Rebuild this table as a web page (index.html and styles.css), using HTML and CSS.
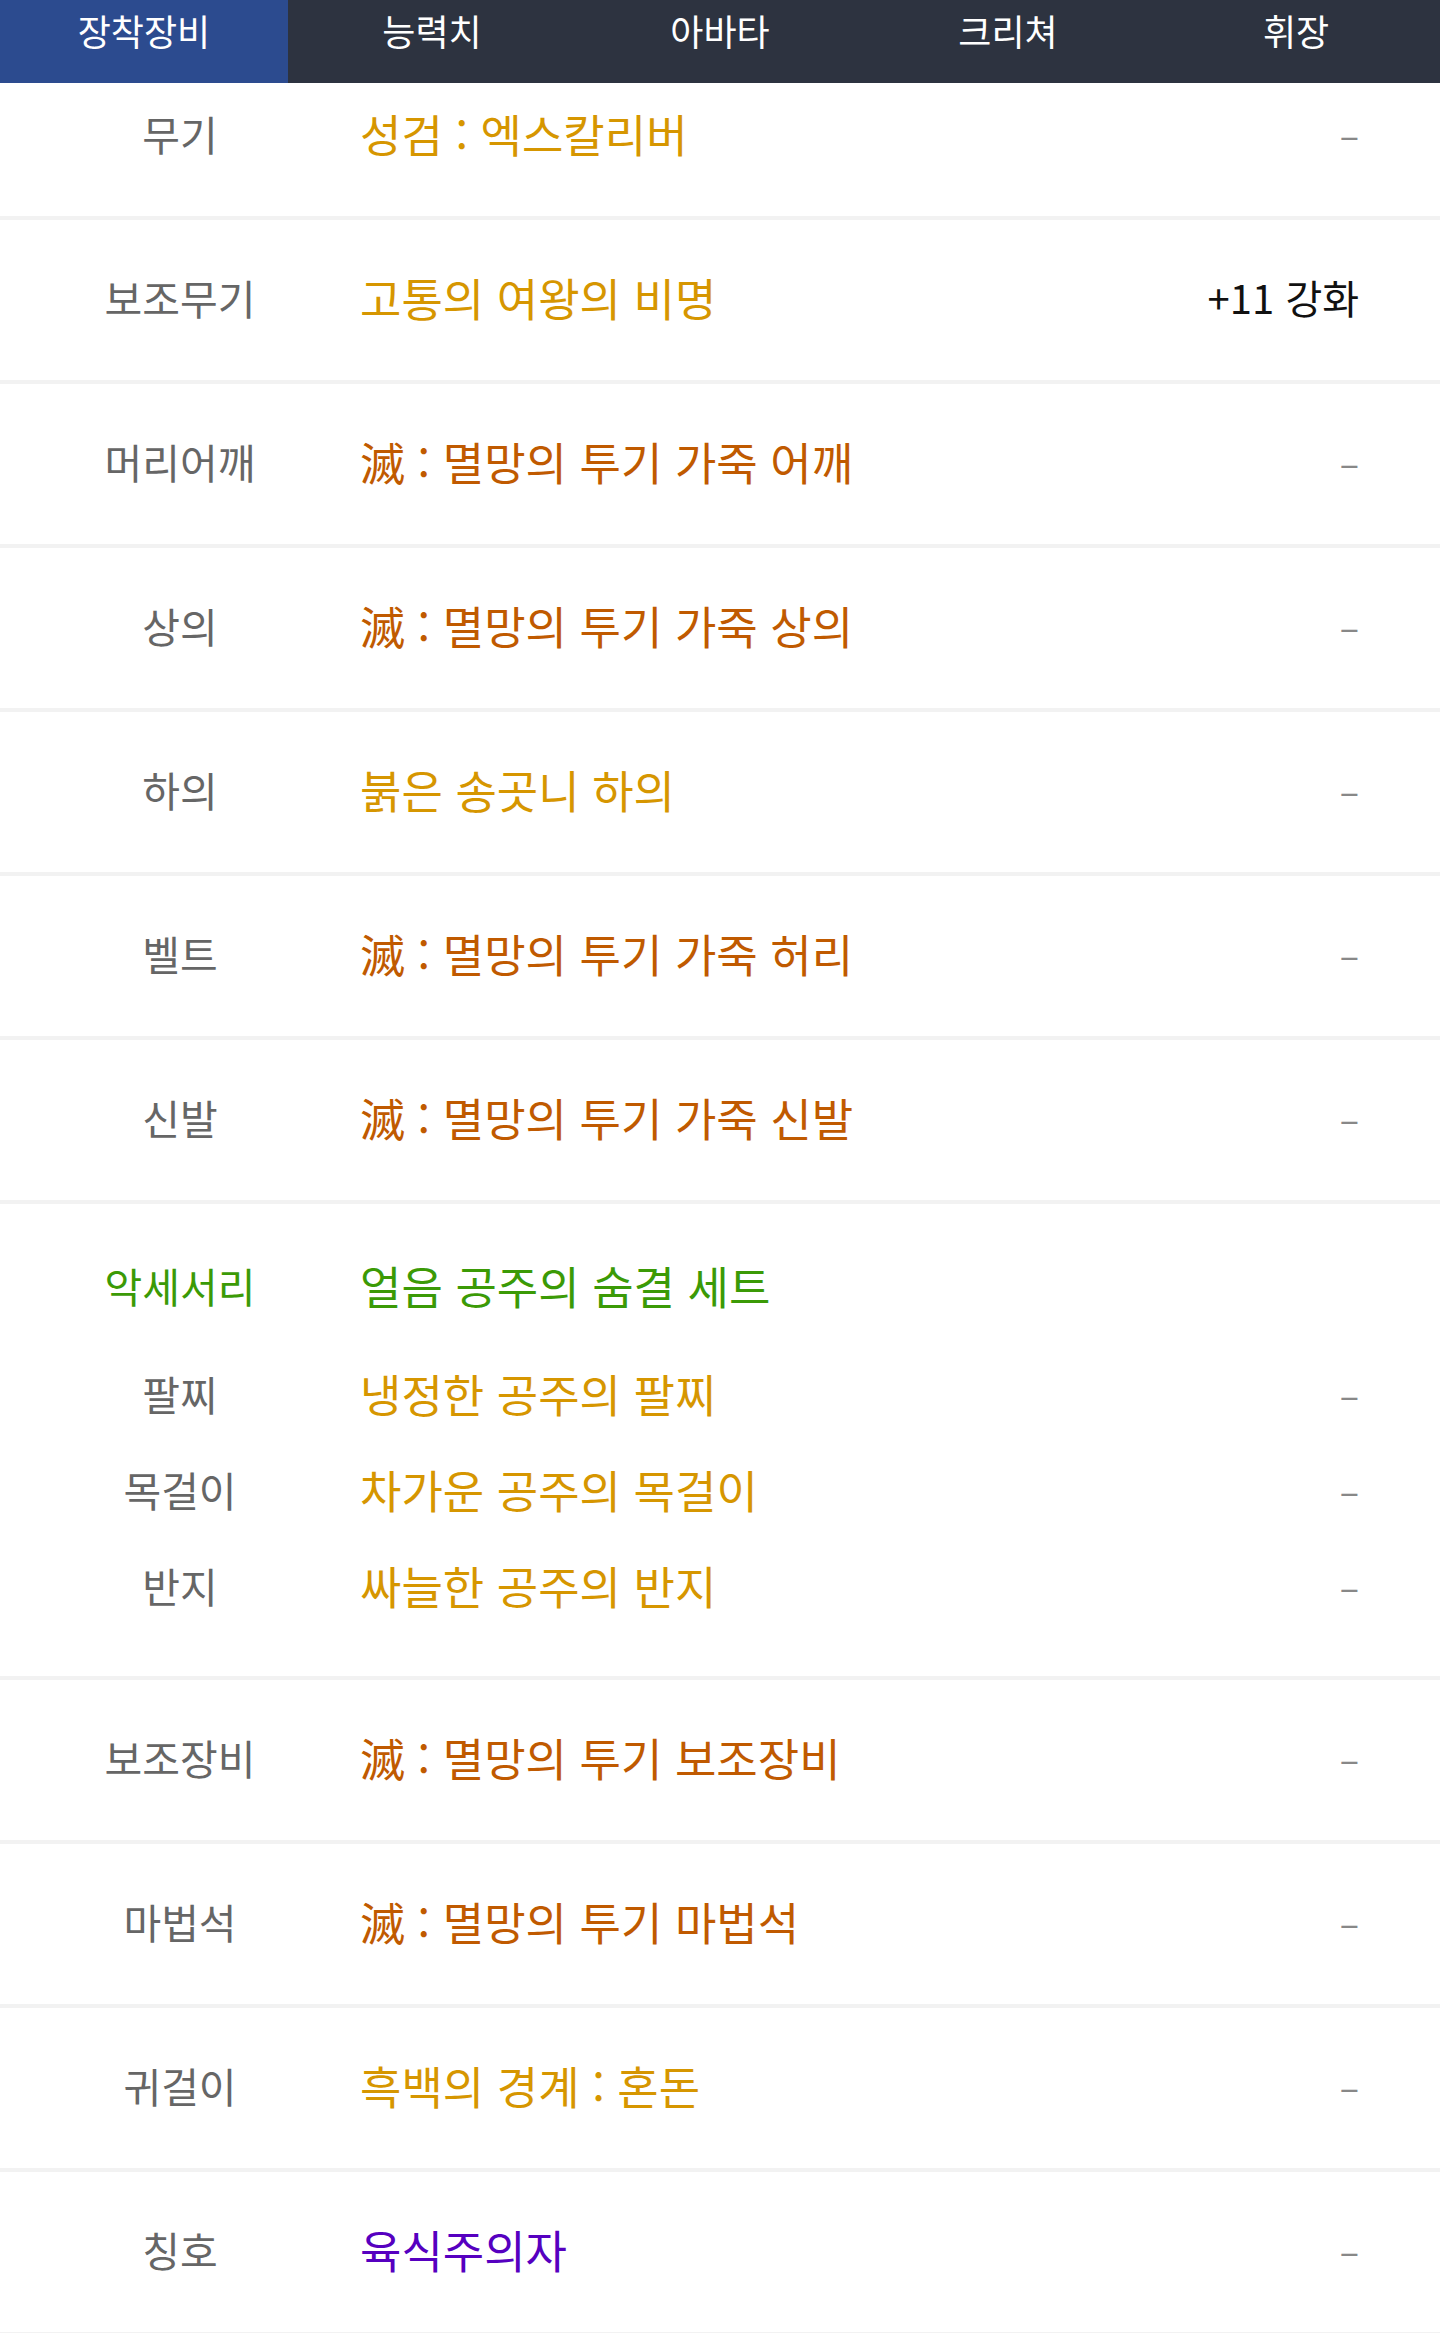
FILE: index.html
```html
<!DOCTYPE html>
<html lang="ko">
<head>
    <meta charset="UTF-8">
    <meta name="viewport" content="width=device-width, initial-scale=1.0">
    <title>장착장비</title>
    <link rel="stylesheet" href="styles.css">
</head>
<body>
    <nav class="tabs">
        <a class="tab active" href="#">장착장비</a>
        <a class="tab" href="#">능력치</a>
        <a class="tab" href="#">아바타</a>
        <a class="tab" href="#">크리쳐</a>
        <a class="tab" href="#">휘장</a>
    </nav>

    <div class="equip-list">
        <div class="equip-row">
            <span class="slot">무기</span>
            <span class="item gold">성검 : 엑스칼리버</span>
            <span class="extra">–</span>
        </div>
        <div class="equip-row">
            <span class="slot">보조무기</span>
            <span class="item gold">고통의 여왕의 비명</span>
            <span class="extra enchant">+11 강화</span>
        </div>
        <div class="equip-row">
            <span class="slot">머리어깨</span>
            <span class="item orange">滅 : 멸망의 투기 가죽 어깨</span>
            <span class="extra">–</span>
        </div>
        <div class="equip-row">
            <span class="slot">상의</span>
            <span class="item orange">滅 : 멸망의 투기 가죽 상의</span>
            <span class="extra">–</span>
        </div>
        <div class="equip-row">
            <span class="slot">하의</span>
            <span class="item gold">붉은 송곳니 하의</span>
            <span class="extra">–</span>
        </div>
        <div class="equip-row">
            <span class="slot">벨트</span>
            <span class="item orange">滅 : 멸망의 투기 가죽 허리</span>
            <span class="extra">–</span>
        </div>
        <div class="equip-row">
            <span class="slot">신발</span>
            <span class="item orange">滅 : 멸망의 투기 가죽 신발</span>
            <span class="extra">–</span>
        </div>

        <!-- set items -->
        <div class="equip-set">
            <div class="set-head">
                <span class="slot green">악세서리</span>
                <span class="item green">얼음 공주의 숨결 세트</span>
            </div>
            <div class="set-row">
                <span class="slot">팔찌</span>
                <span class="item gold">냉정한 공주의 팔찌</span>
                <span class="extra">–</span>
            </div>
            <div class="set-row">
                <span class="slot">목걸이</span>
                <span class="item gold">차가운 공주의 목걸이</span>
                <span class="extra">–</span>
            </div>
            <div class="set-row">
                <span class="slot">반지</span>
                <span class="item gold">싸늘한 공주의 반지</span>
                <span class="extra">–</span>
            </div>
        </div>

        <div class="equip-row">
            <span class="slot">보조장비</span>
            <span class="item orange">滅 : 멸망의 투기 보조장비</span>
            <span class="extra">–</span>
        </div>
        <div class="equip-row">
            <span class="slot">마법석</span>
            <span class="item orange">滅 : 멸망의 투기 마법석</span>
            <span class="extra">–</span>
        </div>
        <div class="equip-row">
            <span class="slot">귀걸이</span>
            <span class="item gold">흑백의 경계 : 혼돈</span>
            <span class="extra">–</span>
        </div>
        <div class="equip-row">
            <span class="slot">칭호</span>
            <span class="item purple">육식주의자</span>
            <span class="extra">–</span>
        </div>
    </div>
</body>
</html>
```

FILE: styles.css
```css
/* Base styles */
* {
    box-sizing: border-box;
    margin: 0;
    padding: 0;
}

body {
    font-family: "Noto Sans CJK KR", "Noto Sans", sans-serif;
    background: #fff;
    color: #333;
}

a {
    text-decoration: none;
}

/* Top tabs */
.tabs {
    position: sticky;
    top: 0;
    z-index: 10;
    display: flex;
    height: 83px;
    background-color: #2d3340;
}

.tab {
    flex: 1;
    text-align: center;
    color: #fff;
    font-size: 36px;
    line-height: 60px;
}

.tab.active {
    background-color: #2c4b8f;
}

/* Equipment list */
.equip-list {
    margin-top: -27px;
}

.equip-row,
.set-head,
.set-row {
    display: flex;
    align-items: center;
    padding-bottom: 6px;
}

.equip-row {
    height: 164px;
    border-bottom: 4px solid #f2f2f2;
}

.slot {
    width: 360px;
    flex-shrink: 0;
    text-align: center;
    font-size: 41px;
    color: #666;
}

.item {
    flex: 1;
    font-size: 45px;
}

.extra {
    padding-right: 81px;
    font-size: 36px;
    color: #888;
}

.extra.enchant {
    font-size: 40px;
    color: #111;
}

.gold {
    color: #d69600;
}

.orange {
    color: #c05a00;
}

.green {
    color: #3b9a06;
}

.purple {
    color: #5600c0;
}

/* Set block */
.equip-set {
    padding: 40px 0;
    border-bottom: 4px solid #f2f2f2;
}

.set-head {
    height: 88px;
    margin-bottom: 16px;
}

.set-row {
    height: 96px;
}
```
